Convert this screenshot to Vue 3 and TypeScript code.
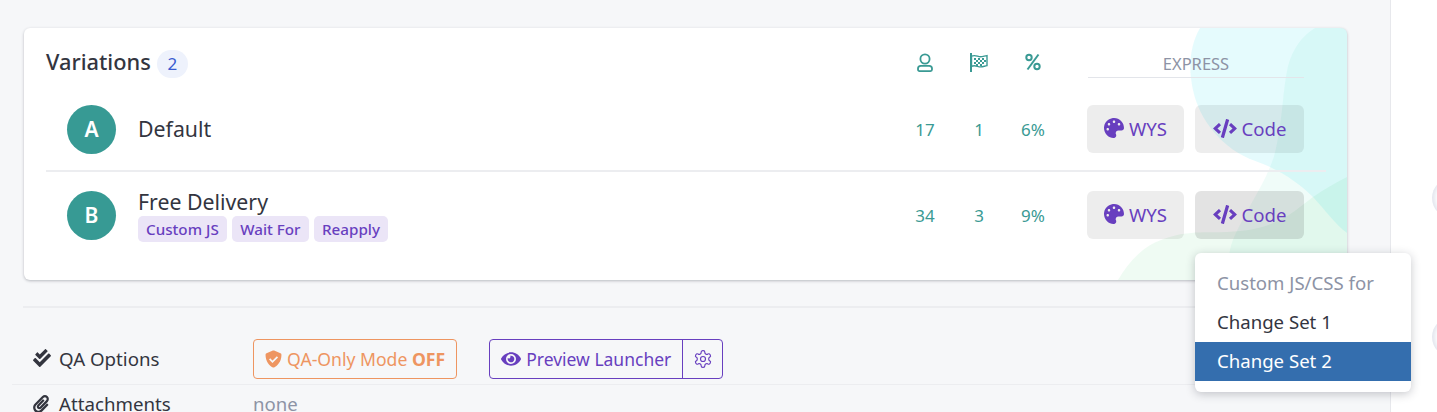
<template>
  <div class="page">
    <main class="content">
      <section class="card">
        <svg class="blobs" viewBox="0 0 240 252" aria-hidden="true">
          <path fill="#00d8f0" fill-opacity="0.1" d="M93 0C84 15 82 35 84 50C87 78 100 100 120 117C135 130 150 133 163 139C180 147 195 158 206 169C218 182 228 196 240 205V0Z" />
          <path fill="#30d8b0" fill-opacity="0.07" d="M208 0C195 8 186 20 181 38C176 60 176 85 170 115C168 125 167 130 163 139C158 152 150 165 143 178C134 195 126 208 123 222C121 232 120 242 120 252H240V0Z" />
          <path fill="#20c850" fill-opacity="0.07" d="M11 252C18 240 26 230 36 222C46 214 58 210 70 207C90 203 105 205 120 204C140 203 155 200 166 195C182 189 194 178 206 169C218 161 228 155 240 149V252Z" />
        </svg>

        <header class="card-head">
          <h2 class="card-title">Variations</h2>
          <span class="count">2</span>
          <div class="stat-heads">
            <span class="stat-head">
              <svg width="18" height="20" viewBox="0 0 18 20" fill="none" stroke="currentColor" stroke-width="1.8"><circle cx="9" cy="6" r="4.6" /><path d="M2 15.5c0-1.6 1.2-2.6 2.8-2.6h8.4c1.6 0 2.8 1 2.8 2.6v1.1c0 .9-.6 1.5-1.5 1.5h-11c-.9 0-1.5-.6-1.5-1.5z" /></svg>
            </span>
            <span class="stat-head">
              <svg width="20" height="19" viewBox="0 0 20 19" fill="none" stroke="currentColor" stroke-width="1.4">
                <path d="M2 0v19" stroke-width="2" />
                <path d="M2.5 3.2c4-1.8 6 .6 9 .6 2.5 0 4-.9 6.5-1.2v10c-2.5.4-4 1.3-6.5 1.3-3 0-5-2.2-9-.6z" />
                <g fill="currentColor" stroke="none">
                  <rect v-for="c in flagChecks" :key="c.x + '-' + c.y" :x="c.x" :y="c.y" width="2" height="2" />
                </g>
              </svg>
            </span>
            <span class="stat-head">
              <svg width="16" height="18" viewBox="0 0 16 18" fill="none" stroke="currentColor" stroke-width="2"><path d="M13.5 1.5 2.5 16.5" /><circle cx="4" cy="4.5" r="2.7" /><circle cx="12" cy="13.5" r="2.7" /></svg>
            </span>
          </div>
          <div class="express">EXPRESS</div>
        </header>

        <div v-for="v in variations" :key="v.letter" class="row" :class="{ tagged: v.tags.length }">
          <span class="avatar">{{ v.letter }}</span>
          <div class="name-block">
            <div class="name">{{ v.name }}</div>
            <div v-if="v.tags.length" class="tags">
              <span v-for="t in v.tags" :key="t" class="tag">{{ t }}</span>
            </div>
          </div>
          <div class="stats">
            <span>{{ v.visitors }}</span>
            <span>{{ v.goals }}</span>
            <span>{{ v.rate }}</span>
          </div>
          <div class="actions">
            <button class="btn btn-wys">
              <svg width="20" height="20" viewBox="0 0 512 512" fill="currentColor"><path d="M204.3 5C104.9 24.4 24.8 104.3 5.2 203.4c-37 187 131.7 326.4 258.8 306.7 41.2-6.4 61.4-54.6 42.5-91.7-23.1-45.4 9.9-98.4 60.9-98.4h79.7c35.8 0 64.8-29.6 64.9-65.3C511.5 97.1 368.1-26.9 204.3 5zM96 320c-17.7 0-32-14.3-32-32s14.3-32 32-32 32 14.3 32 32-14.3 32-32 32zm32-128c-17.7 0-32-14.3-32-32s14.3-32 32-32 32 14.3 32 32-14.3 32-32 32zm128-64c-17.7 0-32-14.3-32-32s14.3-32 32-32 32 14.3 32 32-14.3 32-32 32zm128 64c-17.7 0-32-14.3-32-32s14.3-32 32-32 32 14.3 32 32-14.3 32-32 32z" /></svg>
              WYS
            </button>
            <button class="btn btn-code">
              <svg width="24" height="19" viewBox="0 0 640 512" fill="currentColor"><path d="M278.9 511.5l-61-17.7c-6.4-1.8-10-8.5-8.2-14.9L346.2 8.7c1.8-6.4 8.5-10 14.9-8.2l61 17.7c6.4 1.8 10 8.5 8.2 14.9L293.8 503.3c-1.9 6.4-8.5 10.1-14.9 8.2zm-114-112.2l43.5-46.4c4.6-4.9 4.3-12.7-.8-17.2L117 256l90.6-79.7c5.1-4.5 5.5-12.3.8-17.2l-43.5-46.4c-4.5-4.8-12.1-5.1-17-.5L3.8 247.2c-5.1 4.7-5.1 12.8 0 17.5l144.1 135.1c4.9 4.6 12.5 4.4 17-.5zm327.2.6l144.1-135.1c5.1-4.7 5.1-12.8 0-17.5L492.1 112.1c-4.8-4.5-12.4-4.3-17 .5L431.6 159c-4.6 4.9-4.3 12.7.8 17.2L523 256l-90.6 79.7c-5.1 4.5-5.5 12.3-.8 17.2l43.5 46.4c4.5 4.9 12.1 5.1 17 .6z" /></svg>
              Code
            </button>
          </div>
        </div>
      </section>

      <hr class="rule" />

      <div class="opt-row">
        <div class="opt-label">
          <svg width="18" height="18" viewBox="0 0 512 512" fill="currentColor"><path d="M505 174.8l-39.6-39.6c-9.4-9.4-24.6-9.4-33.9 0L192 374.7 80.6 263.2c-9.4-9.4-24.6-9.4-33.9 0L7 302.9c-9.4 9.4-9.4 24.6 0 34L175 505c9.4 9.4 24.6 9.4 33.9 0l296-296.2c9.4-9.5 9.4-24.7.1-34zm-324 106.3c6.2 6.3 16.4 6.3 22.6 0l208-208.2c6.2-6.3 6.2-16.4 0-22.6L366.1 4.7c-6.2-6.3-16.4-6.3-22.6 0L192 156.2l-55.4-55.5c-6.2-6.3-16.4-6.3-22.6 0L68.7 146c-6.2 6.3-6.2 16.4 0 22.6l112.3 112.5z" /></svg>
          QA Options
        </div>
        <button class="qa-btn">
          <svg width="17" height="18" viewBox="0 0 512 512"><path fill="currentColor" d="M466.5 83.7l-192-80a48.15 48.15 0 0 0-36.9 0l-192 80C27.7 91.1 16 108.6 16 128c0 198.5 114.5 335.7 221.5 380.3 11.8 4.9 25.1 4.9 36.9 0C360.1 472.6 496 349.3 496 128c0-19.4-11.7-36.9-29.5-44.3z" /><path fill="none" stroke="#f6f7f9" stroke-width="52" d="M140 255l85 85 150-150" /></svg>
          <span>QA-Only Mode <b>OFF</b></span>
        </button>
        <div class="preview">
          <button class="preview-main">
            <svg width="20" height="18" viewBox="0 0 576 512" fill="currentColor"><path d="M572.52 241.4C518.29 135.59 410.93 64 288 64S57.68 135.64 3.48 241.41a32.35 32.35 0 0 0 0 29.19C57.71 376.41 165.07 448 288 448s230.32-71.64 284.52-177.41a32.35 32.35 0 0 0 0-29.19zM288 400a144 144 0 1 1 144-144 143.93 143.93 0 0 1-144 144zm0-240a95.31 95.31 0 0 0-25.31 3.79 47.85 47.85 0 0 1-66.9 66.9A95.78 95.78 0 1 0 288 160z" /></svg>
            Preview Launcher
          </button>
          <button class="preview-gear">
            <svg width="20" height="20" viewBox="0 0 24 24" fill="none" stroke="currentColor" stroke-width="1.4"><path d="M12.22 2h-.44a2 2 0 0 0-2 2v.18a2 2 0 0 1-1 1.73l-.43.25a2 2 0 0 1-2 0l-.15-.08a2 2 0 0 0-2.73.73l-.22.38a2 2 0 0 0 .73 2.73l.15.1a2 2 0 0 1 1 1.72v.51a2 2 0 0 1-1 1.74l-.15.09a2 2 0 0 0-.73 2.73l.22.38a2 2 0 0 0 2.73.73l.15-.08a2 2 0 0 1 2 0l.43.25a2 2 0 0 1 1 1.73V20a2 2 0 0 0 2 2h.44a2 2 0 0 0 2-2v-.18a2 2 0 0 1 1-1.73l.43-.25a2 2 0 0 1 2 0l.15.08a2 2 0 0 0 2.73-.73l.22-.39a2 2 0 0 0-.73-2.73l-.15-.08a2 2 0 0 1-1-1.74v-.5a2 2 0 0 1 1-1.74l.15-.09a2 2 0 0 0 .73-2.73l-.22-.38a2 2 0 0 0-2.73-.73l-.15.08a2 2 0 0 1-2 0l-.43-.25a2 2 0 0 1-1-1.73V4a2 2 0 0 0-2-2z" /><circle cx="12" cy="12" r="3" /></svg>
          </button>
        </div>
      </div>
      <div class="opt-row opt-row-2">
        <div class="opt-label">
          <svg width="16" height="18" viewBox="0 0 448 512" fill="currentColor"><path d="M43.246 466.142c-58.43-60.289-57.341-157.511 1.386-217.581L254.392 34c44.316-45.332 116.351-45.336 160.671 0 43.89 44.894 43.943 117.329 0 162.276L232.214 383.128c-29.855 30.537-78.633 30.111-107.982-.998-28.275-29.97-27.368-77.473 1.452-106.953l143.743-146.835c6.182-6.314 16.312-6.422 22.626-.241l22.861 22.379c6.315 6.182 6.422 16.312.241 22.626L171.427 319.927c-4.932 5.045-5.236 13.428-.648 18.292 4.372 4.634 11.245 4.711 15.688.165l182.849-186.851c19.613-20.062 19.613-52.725-.011-72.798-19.189-19.627-49.957-19.637-69.154 0L90.39 293.295c-34.763 35.56-35.299 93.12-1.191 128.313 34.01 35.093 88.985 35.137 123.058.286l172.06-175.999c6.177-6.319 16.307-6.433 22.626-.256l22.877 22.364c6.319 6.177 6.434 16.307.256 22.626l-172.06 175.998c-59.576 60.938-155.943 60.216-214.77-.485z" /></svg>
          Attachments
        </div>
        <span class="none">none</span>
      </div>

      <div class="menu">
        <div class="menu-title">Custom JS/CSS for</div>
        <div class="menu-item">Change Set 1</div>
        <div class="menu-item active">Change Set 2</div>
      </div>
    </main>
    <aside class="side">
      <span class="side-dot dot-1"></span>
      <span class="side-dot dot-2"></span>
    </aside>
  </div>
</template>

<script setup lang="ts">
interface Variation {
  letter: string
  name: string
  tags: string[]
  visitors: number
  goals: number
  rate: string
}

const variations: Variation[] = [
  { letter: 'A', name: 'Default', tags: [], visitors: 17, goals: 1, rate: '6%' },
  { letter: 'B', name: 'Free Delivery', tags: ['Custom JS', 'Wait For', 'Reapply'], visitors: 34, goals: 3, rate: '9%' },
]

// little squares of the checkered flag in the header
const flagChecks = [
  { x: 5, y: 5 }, { x: 9, y: 5 }, { x: 13, y: 5 },
  { x: 7, y: 7 }, { x: 11, y: 7 }, { x: 15, y: 7 },
  { x: 5, y: 9 }, { x: 9, y: 9 }, { x: 13, y: 9 },
  { x: 7, y: 11 }, { x: 11, y: 11 },
]
</script>

<style>
html, body { margin: 0; background: #f6f7f9; }
</style>

<style scoped>
.page {
  display: flex;
  width: 1437px;
  height: 412px;
  overflow: hidden;
  font-family: "Noto Sans", "Open Sans", sans-serif;
  color: #33353f;
}
.content {
  position: relative;
  width: 1390px;
  padding: 28px 43px 0 24px;
  box-sizing: border-box;
}
.side {
  position: relative;
  flex: 1;
  background: #fff;
  border-left: 1px solid #e7e8ec;
}
.side-dot {
  position: absolute;
  left: 41px;
  width: 40px;
  height: 40px;
  border-radius: 50%;
  background: #fff;
  box-shadow: inset 3px 0 4px #e3e6ee;
}
.dot-1 { top: 178px; }
.dot-2 { top: 317px; }

.card {
  position: relative;
  height: 252px;
  box-sizing: border-box;
  padding: 0 43px 0 22px;
  background: #fff;
  border-radius: 6px;
  box-shadow: 0 1px 3px rgba(40, 45, 60, 0.3);
  overflow: hidden;
}
.blobs {
  position: absolute;
  right: 0;
  top: 0;
  width: 240px;
  height: 252px;
}
.card-head {
  position: relative;
  display: flex;
  align-items: flex-start;
  height: 50px;
}
.card-title {
  margin: 19px 6px 0 0;
  font-size: 21.8px;
  line-height: 30px;
  font-weight: 500;
}
.count {
  width: 31px;
  height: 28px;
  margin-top: 22px;
  border-radius: 14px;
  background: #eef2fc;
  color: #3a5bd0;
  font-size: 17px;
  line-height: 28px;
  text-align: center;
}
.stat-heads {
  display: flex;
  margin-left: auto;
  margin-top: 25px;
  color: #3a9a94;
}
.stat-head {
  display: flex;
  justify-content: center;
  width: 54px;
}
.express {
  width: 216px;
  height: 50px;
  box-sizing: border-box;
  margin-left: 28px;
  padding-top: 26px;
  line-height: 20px;
  border-bottom: 1px solid #e3e5ea;
  color: #8d93a5;
  font-size: 16.5px;
  text-align: center;
}
.row {
  position: relative;
  display: flex;
  align-items: center;
  height: 94px;
  padding: 10px 22px 0 21px;
  margin-right: -22px;
  border-bottom: 2px solid #ecedf0;
  box-sizing: border-box;
}
.row.tagged {
  height: 86px;
  padding-top: 0;
  border-bottom: 0;
}
/* the open dropdown hangs off this button, so it keeps its hover shade */
.row.tagged .btn-code { background: rgba(0, 0, 0, 0.11); }
.avatar {
  flex: none;
  width: 49px;
  height: 49px;
  border-radius: 50%;
  background: #379a94;
  color: #fff;
  font-size: 21px;
  font-weight: 600;
  line-height: 49px;
  text-align: center;
}
.name-block { margin-left: 22px; }
.name { font-size: 21.3px; line-height: 26px; }
.tags { display: flex; gap: 5.5px; margin-top: 1px; }
.tag {
  height: 26px;
  padding: 0 8px;
  border-radius: 5px;
  background: #ebe5f7;
  color: #683fbf;
  font-size: 15.2px;
  font-weight: 500;
  line-height: 26px;
}
.stats {
  display: flex;
  margin-left: auto;
  color: #3a9a94;
  font-size: 17px;
}
.stats span {
  width: 54px;
  text-align: center;
}
.actions {
  display: flex;
  gap: 11px;
  margin-left: 27px;
}
.btn {
  display: flex;
  align-items: center;
  justify-content: center;
  gap: 5px;
  height: 48px;
  padding: 0 0 2px;
  border: 0;
  border-radius: 6px;
  background: rgba(0, 0, 0, 0.07);
  color: #683fbf;
  font: inherit;
  font-size: 18.6px;
}
.btn-wys { width: 97px; }
.btn-code { width: 109px; }

.rule {
  height: 2px;
  margin: 26px 0 0 -1px;
  border: 0;
  background: #ecedf0;
}
.opt-row {
  display: flex;
  align-items: flex-start;
  height: 48px;
  margin: 29px -43px 0 -12px;
  padding: 2px 0 0 21px;
  border-bottom: 1px solid #ecedf0;
  box-sizing: border-box;
}
.opt-row-2 {
  margin-top: 0;
  border-bottom: 0;
  height: 40px;
  padding-top: 6px;
}
.opt-label {
  display: flex;
  align-items: center;
  gap: 8px;
  width: 220px;
  height: 40px;
  padding-bottom: 2px;
  box-sizing: border-box;
  font-size: 18.7px;
}
.opt-row-2 .opt-label {
  height: 25px;
  padding-bottom: 0;
  gap: 10px;
}
.none {
  color: #8d93a5;
  font-size: 18.6px;
  line-height: 25px;
}
.qa-btn {
  display: flex;
  align-items: center;
  gap: 5px;
  height: 40px;
  padding: 0 11px;
  border: 1px solid #ee9561;
  border-radius: 4px;
  background: transparent;
  color: #ee9561;
  font: inherit;
  font-size: 17.6px;
}
.qa-btn b { font-weight: 700; }
.preview {
  display: flex;
  height: 40px;
  margin-left: 32px;
  border: 1px solid #683fbf;
  border-radius: 4px;
  box-sizing: border-box;
  color: #683fbf;
}
.preview button {
  display: flex;
  align-items: center;
  border: 0;
  background: transparent;
  color: inherit;
  font: inherit;
  font-size: 17.5px;
}
.preview .preview-main { gap: 5px; padding: 0 11px; }
.preview .preview-gear { padding: 0 9.5px; border-left: 1px solid #683fbf; }

.menu {
  position: absolute;
  left: 1195px;
  top: 253px;
  width: 216px;
  height: 139px;
  box-sizing: border-box;
  padding-top: 11px;
  background: #fff;
  border-radius: 6px;
  box-shadow: 0 2px 10px rgba(30, 35, 50, 0.25);
  z-index: 2;
}
.menu-title, .menu-item {
  height: 39px;
  padding-left: 22px;
  font-size: 18.6px;
  line-height: 37px;
}
.menu-title { color: #8d93a5; }
.menu-item { color: #33353f; }
.menu-item.active { background: #346eae; color: #fff; }
</style>
